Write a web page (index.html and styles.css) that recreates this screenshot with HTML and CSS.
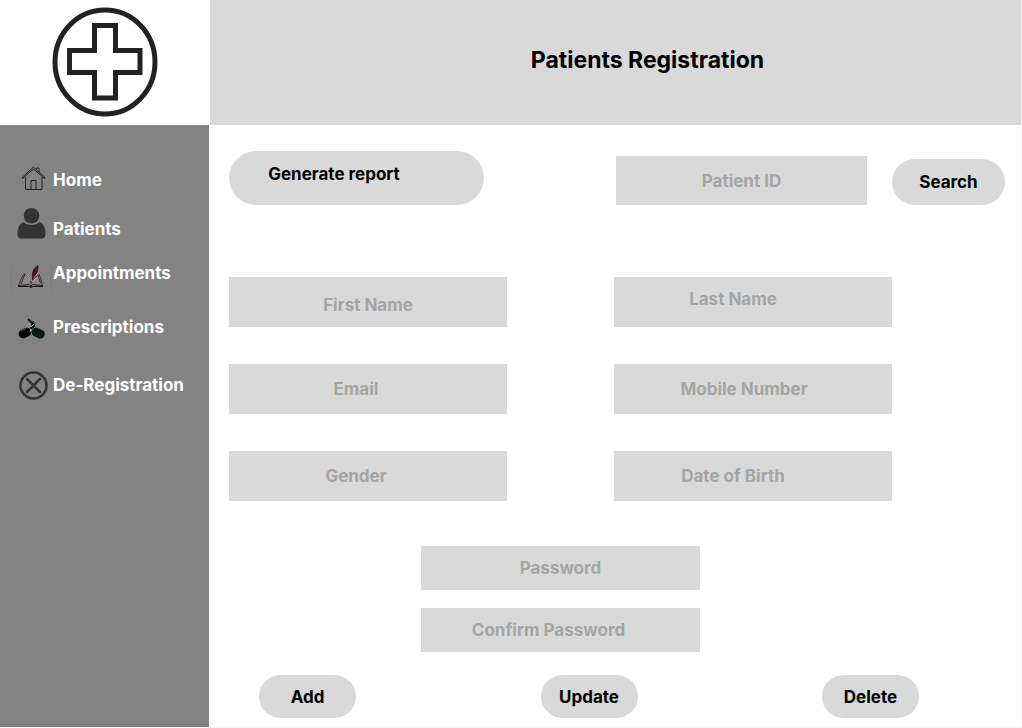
FILE: index.html
```html
<!DOCTYPE html>
<html lang="en">
<head>
<meta charset="utf-8">
<meta name="viewport" content="width=device-width, initial-scale=1">
<title>Patients Registration</title>
<link rel="stylesheet" href="styles.css">
</head>
<body>
<div class="page">
  <div class="brand">
    <svg class="logo" viewBox="0 0 106 110" role="img" aria-label="Clinic logo">
      <ellipse cx="53" cy="55" rx="50" ry="52" fill="none" stroke="#222" stroke-width="5"/>
      <path d="M42.500 18.500H63.500V43.500H88V65.500H63.500V91H42.500V65.500H17.500V43.500H42.500Z" fill="none" stroke="#222" stroke-width="5"/>
    </svg>
  </div>
  <header class="header"><h1 class="title">Patients Registration</h1></header>
  <nav class="sidebar" aria-label="Main">
    <ul class="menu">
      <li><a class="menu-link" href="#home">
        <svg class="icon" viewBox="0 0 36 40" aria-hidden="true">
          <g fill="none" stroke="#222" stroke-width="1">
            <path d="M11.500 17V29.500H28V17"/>
            <path d="M8.500 18.500V17L19.500 7L30.500 17V18.500L19.500 9L8.500 18.500"/>
            <path d="M22.500 9V8H25V12"/>
            <path d="M17 29V20.500H22V29"/>
          </g>
        </svg>Home</a></li>
      <li><a class="menu-link" href="#patients">
        <svg class="icon" viewBox="0 0 36 40" aria-hidden="true">
          <g fill="#333">
            <circle cx="17.500" cy="6.700" r="7.800"/>
            <path d="M9.500 13C13 17 22 17 25.500 13C29.500 14.500 31.500 19 31.500 25C31.500 28 30 29.500 27 29.500H8C5 29.500 3.500 28 3.500 25C3.500 19 5.500 14.500 9.500 13Z"/>
          </g>
        </svg>Patients</a></li>
      <li><a class="menu-link" href="#appointments">
        <svg class="icon" viewBox="0 0 36 40" aria-hidden="true">
          <path d="M-2.500 12V41M37.500 12V41" stroke="#7b7b7b"/>
          <path d="M5 31L8 21Q14 19 17 29Q20 21 26 20L28 31Q22 30 17 32Q11 30 5 31Z" fill="#8a8685"/>
          <path d="M5 31L9 22M7 31L11 21M9 21Q14 20 17 30M17 31Q19 25 23 23M25 21L28.500 31M24 22L26.500 30" fill="none" stroke="#3a2c2c" stroke-width="1"/>
          <path d="M12 21Q15 23 16 28M18 29Q21 25 24 24" fill="none" stroke="#b5b0af" stroke-width="1"/>
          <path d="M4 32Q12 30 17 32Q22 30 29 32V34H19L17 35L15 34H4Z" fill="#1b1717"/>
          <path d="M6 32Q12 31 16 33M18 33Q22 31 27 32" fill="none" stroke="#aaa" stroke-width=".7"/>
          <path d="M18 24Q17 16 24 12Q26 18 20 24L18 28Z" fill="#4c1513"/>
        </svg>Appointments</a></li>
      <li><a class="menu-link" href="#prescriptions">
        <svg class="icon" viewBox="0 0 36 40" aria-hidden="true">
          <rect x="4.500" y="21.500" width="13" height="9" rx="4.500" fill="#050707" transform="rotate(-24 11 26)"/>
          <rect x="17.500" y="21.500" width="13.500" height="9" rx="4.500" fill="#071b0b" transform="rotate(24 24 26)"/>
          <path d="M7 24L12 21.500M24 21L28 23" stroke="#54605a" stroke-width="1"/>
          <path d="M14 12L18 16L17 22M19 14L20 19L17 22" fill="none" stroke="#151a17" stroke-width="2"/>
          <path d="M15 16L17 20L20 17M17 22L16 25" fill="none" stroke="#b5b9b6" stroke-width="1"/>
        </svg>Prescriptions</a></li>
      <li><a class="menu-link" href="#de-registration">
        <svg class="icon" viewBox="0 0 36 40" aria-hidden="true">
          <g fill="none" stroke="#333" stroke-width="2.500" stroke-linecap="round">
            <circle cx="19.500" cy="20.500" r="13"/>
            <path d="M13 14L26 27M26 14L13 27"/>
          </g>
        </svg>De-Registration</a></li>
    </ul>
  </nav>
  <main class="main">
    <div class="toolbar">
      <button class="pill report" type="button">Generate report</button>
      <form class="search">
        <input class="field search-field" type="text" placeholder="Patient ID" aria-label="Patient ID">
        <button class="pill search-button" type="button">Search</button>
      </form>
    </div>
    <form class="registration">
      <div class="details">
        <input class="field low" type="text" placeholder="First Name" aria-label="First Name">
        <input class="field shift-large high" type="text" placeholder="Last Name" aria-label="Last Name">
        <input class="field shift" type="email" placeholder="Email" aria-label="Email">
        <input class="field shift-small" type="tel" placeholder="Mobile Number" aria-label="Mobile Number">
        <input class="field shift" type="text" placeholder="Gender" aria-label="Gender">
        <input class="field shift-large" type="text" placeholder="Date of Birth" aria-label="Date of Birth">
      </div>
      <div class="passwords">
        <input class="field" type="password" placeholder="Password" aria-label="Password">
        <input class="field shift" type="password" placeholder="Confirm Password" aria-label="Confirm Password">
      </div>
      <div class="actions">
        <button class="pill" type="button">Add</button>
        <button class="pill" type="button">Update</button>
        <button class="pill" type="button">Delete</button>
      </div>
    </form>
  </main>
</div>
</body>
</html>
```
FILE: styles.css
```css
* {
  box-sizing: border-box;
}

body {
  margin: 0;
  background: #fff;
  color: #000;
  font: 700 17px/24px Inter, "Liberation Sans", sans-serif;
}

.page {
  display: grid;
  grid-template-columns: 209px 1fr;
  grid-template-rows: auto 1fr;
  min-height: 100vh;
  border-right: 1px solid #f5f5f5;
  border-bottom: 1px solid #f5f5f5;
}

.brand {
  display: flex;
  justify-content: center;
  padding: 7px 0 8px;
}

.logo {
  width: 106px;
  height: 110px;
}

.header {
  display: flex;
  align-items: center;
  justify-content: center;
  margin-left: 1px;
  padding: 0 0 6px 64px;
  background: #d9d9d9;
}

.title {
  margin: 0;
  font-size: 23px;
  line-height: 32px;
  font-weight: 700;
}

.sidebar {
  padding: 30px 0 0 14px;
  background: #838383;
}

.menu {
  display: grid;
  grid-template-rows: 50px 48px 40px 68px 48px;
  align-items: center;
  margin: 0;
  padding: 0;
  list-style: none;
}

.menu-link {
  display: flex;
  align-items: center;
  gap: 3px;
  color: #fff;
  text-decoration: none;
}

.icon {
  flex: none;
  width: 36px;
  height: 40px;
  overflow: visible;
}

.main {
  padding: 26px 16px 8px 20px;
}

.toolbar {
  display: flex;
  align-items: flex-end;
  justify-content: space-between;
  margin-bottom: 72px;
}

.search {
  display: flex;
  align-items: flex-end;
  gap: 25px;
}

.field,
.pill {
  border: 0;
  background: #d9d9d9;
  color: inherit;
  font: inherit;
  text-align: center;
}

.field {
  width: 100%;
  height: 50px;
  padding: 0;
  border-radius: 0;
}

.field::placeholder {
  color: #a5a5a5;
  opacity: 1;
}

.field.shift-small {
  padding-right: 18px;
}

.field.shift {
  padding-right: 24px;
}

.field.shift-large {
  padding-right: 40px;
}

.field.low {
  padding-top: 6px;
}

.field.high {
  padding-bottom: 6px;
}

.pill {
  width: 97px;
  height: 43px;
  padding: 0;
  border-radius: 22px;
}

.pill.report {
  width: 255px;
  height: 54px;
  padding: 0 45px 8px 0;
  border-radius: 27px;
}

.field.search-field {
  width: 251px;
  height: 49px;
}

.pill.search-button {
  width: 113px;
  height: 46px;
  border-radius: 23px;
}

.registration {
  padding-right: 113px;
}

.details {
  display: grid;
  grid-template-columns: 1fr 1fr;
  gap: 37px 107px;
  margin-bottom: 45px;
}

.passwords {
  display: grid;
  gap: 18px;
  width: 42%;
  margin: 0 auto 23px;
}

.passwords .field {
  height: 44px;
}

.actions {
  display: flex;
  justify-content: space-between;
  padding-left: 30px;
  margin-right: -27px;
}
```
